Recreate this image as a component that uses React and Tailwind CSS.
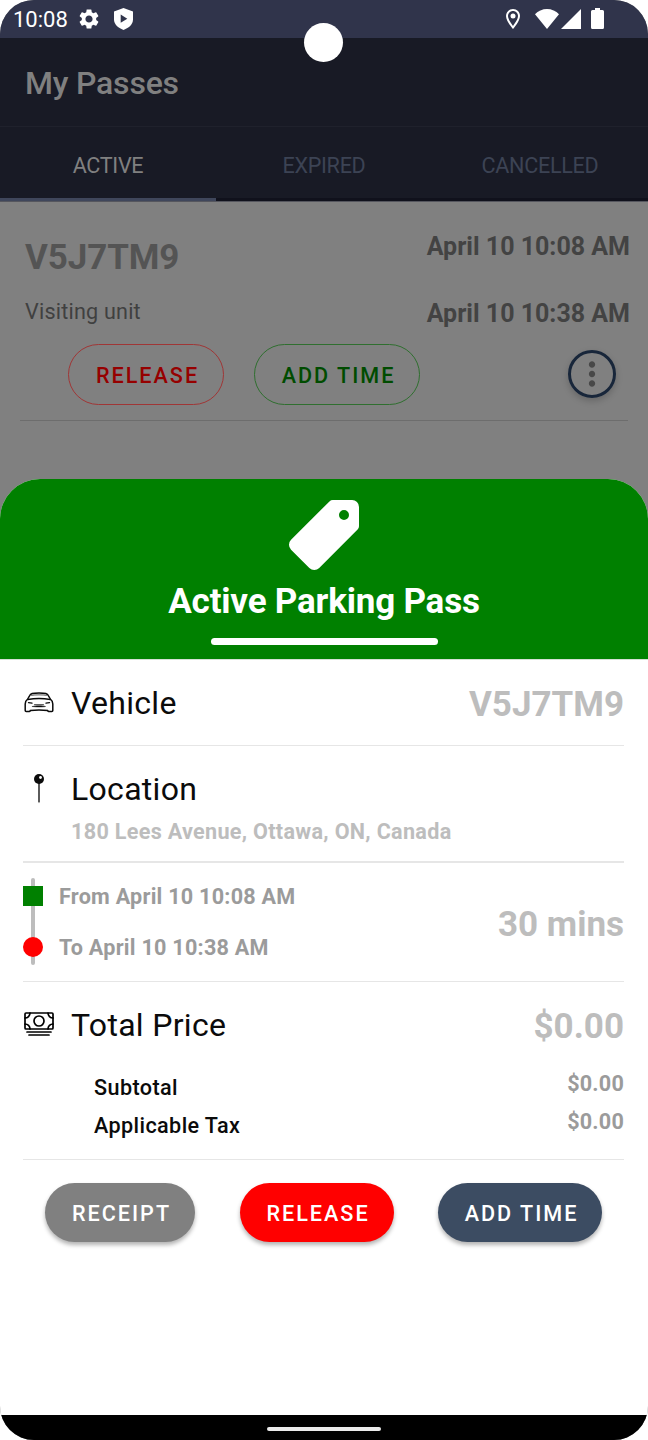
import React from 'react';
import { MdSettings, MdOutlineLocationOn, MdMoreVert } from 'react-icons/md';
import { IoCashOutline, IoPricetag } from 'react-icons/io5';

const StatusBar = () => (
  <div className="relative h-[38px] bg-[#30344b] text-white">
    <div className="flex h-full items-center justify-between pl-[13px] pr-[44px]">
      <div className="flex items-center">
        <span className="pt-[2px] text-[22px] leading-none">10:08</span>
        <MdSettings className="ml-[9px] size-[24px]" />
        <svg className="ml-[13px] h-[22px] w-[19px]" viewBox="0 0 19 22">
          <path d="M9.5 0 19 3.4v8.2c0 4.8-3.8 8.4-9.5 10.4C3.8 20 0 16.4 0 11.6V3.4z" fill="#fff" />
          <path d="M6.7 6.6v8.2l6.6-4.1z" fill="#30344b" />
        </svg>
      </div>
      <div className="flex items-center pb-[1px]">
        <MdOutlineLocationOn className="size-[24px]" />
        <svg className="ml-[10px] h-[20px] w-[24px]" viewBox="0 0 24 20">
          <path d="M12 20 0 5.2C3 2 7.4 0 12 0s9 2 12 5.2z" fill="#fff" />
        </svg>
        <svg className="ml-[2px] size-[20px]" viewBox="0 0 20 20">
          <path d="M20 0v20H0z" fill="#fff" />
        </svg>
        <svg className="ml-[10px] h-[21px] w-[13px]" viewBox="0 0 13 21">
          <path d="M4 0h5v2h2.5A1.5 1.5 0 0 1 13 3.5v16a1.5 1.5 0 0 1-1.5 1.5h-10A1.5 1.5 0 0 1 0 19.5v-16A1.5 1.5 0 0 1 1.5 2H4z" fill="#fff" />
        </svg>
      </div>
    </div>
    <div className="absolute left-[304px] top-[23px] size-[39px] rounded-full bg-white" />
  </div>
);

const CarIcon = () => (
  <svg className="size-[32px]" viewBox="0 0 32 32" fill="none" stroke="#0b0b0b" strokeWidth="1.5" strokeLinecap="round" strokeLinejoin="round">
    <path d="M2.2 23.500V17c0-2.400.9-3.800 2.500-5L6.500 8.800C7.700 6.300 9.300 5.900 16 5.900s8.300.4 9.500 2.900l1.800 3.200c1.600 1.200 2.500 2.600 2.500 5v6.500a1 1 0 0 1-1 1h-3a1 1 0 0 1-1-.9c-5-.7-12.600-.7-17.600 0a1 1 0 0 1-1 .9h-3a1 1 0 0 1-1-1z" />
    <path d="M4.700 12.400c6-.9 16.600-.9 22.600 0" />
    <path d="M8.500 8.300c4-.6 11-.6 15 0" strokeWidth="0.7" />
    <path d="M5.500 15.700l3.500.5M26.500 15.700l-3.500.5" strokeWidth="1.300" />
    <path d="M11.500 17.700h9" strokeWidth="0.8" />
    <path d="M9.500 19.500c2-.9 11-.9 13 0-2 .6-11 .6-13 0z" fill="#0b0b0b" strokeWidth="0.500" />
  </svg>
);

const PinIcon = () => (
  <svg className="size-[32px]" viewBox="0 0 32 32">
    <path d="M15.2 9h1.600v19.500l-.8 1.800-.8-1.800z" fill="#333" />
    <circle cx="16" cy="6" r="5" fill="#0b0b0b" />
    <circle cx="17.5" cy="4.5" r="1.4" fill="#fff" />
  </svg>
);

const Tab = ({ label, active }) => (
  <div
    className={`flex h-full flex-1 items-center justify-center border-b-[3px] pt-[7px] text-[21.6px] tracking-[-0.3px] ${
      active ? 'border-[#3f465b] text-[#808080]' : 'border-[#10111c] text-[#3c4354]'
    }`}
  >
    {label}
  </div>
);

const PassItem = () => (
  <div className="h-[277px] pl-[25px] pr-[18px] pt-[30px]">
    <div className="flex justify-between font-bold">
      <div>
        <p className="mt-[5px] text-[35px] leading-[42px] tracking-[-0.1px] text-[#545454]">V5J7TM9</p>
        <p className="mt-[19px] text-[21.6px] font-normal leading-[28px] tracking-[0.2px] text-[#404040]">Visiting unit</p>
      </div>
      <div className="text-right text-[25px] leading-[30px] text-[#434343]">
        <p>April 10 10:08 AM</p>
        <p className="mt-[37px]">April 10 10:38 AM</p>
      </div>
    </div>
    <div className="mt-[15px] flex items-center pl-[43px] text-[21.6px] font-medium tracking-[2px]">
      <button className="h-[61px] w-[156px] rounded-full border border-[#a03636] pl-[3px] pt-[3px] text-[#960000]">RELEASE</button>
      <button className="ml-[30px] h-[61px] w-[166px] rounded-full border border-[#2f6f2f] pl-[3px] pt-[3px] text-[#004c00]">ADD TIME</button>
      <button className="mb-[2px] ml-[148px] flex size-[48px] items-center justify-center rounded-full border-[3px] border-[#18263a] text-[#484848] shadow-[0_3px_7px_rgba(0,0,0,0.2)]">
        <MdMoreVert className="size-[38px] shrink-0" />
      </button>
    </div>
    <div className="-ml-[5px] mr-[2px] mt-[15px] h-px bg-[#6d6d6d]" />
  </div>
);

const SectionTitle = ({ icon, children }) => (
  <div className="flex items-center">
    {icon}
    <h3 className="ml-[16px] text-[32px] leading-[38px] tracking-[0.3px] text-[#0b0b0b]">{children}</h3>
  </div>
);

const PriceLine = ({ label, value }) => (
  <div className="flex h-[38px] justify-between pl-[71px] text-[21.6px] leading-[26px]">
    <span className="pt-[4px] font-medium tracking-[0.4px] text-[#0b0b0b]">{label}</span>
    <span className="font-bold tracking-[0.2px] text-[#9b9b9b]">{value}</span>
  </div>
);

const PassSheet = () => (
  <div className="flex flex-1 flex-col overflow-hidden rounded-t-[40px] bg-white">
    <div className="flex h-[181px] flex-col items-center border-b border-[#d5e0d5] bg-[#008000] pt-[16px] text-white">
      <IoPricetag className="size-[80px]" />
      <h2 className="mt-[6px] text-[35px] font-bold leading-[42px] tracking-[-0.2px]">Active Parking Pass</h2>
      <div className="mt-[15px] h-[7px] w-[227px] rounded-full bg-white" />
    </div>

    <div className="pl-[23px] pr-[24px]">
      <div className="flex h-[86px] items-center justify-between border-b border-[#e6e6e6]">
        <SectionTitle icon={<CarIcon />}>Vehicle</SectionTitle>
        <span className="pt-[5px] text-[35px] font-bold leading-[42px] text-[#bdbdbd]">V5J7TM9</span>
      </div>

      <div className="h-[117px] border-b-2 border-[#e6e6e6] pt-[24px]">
        <SectionTitle icon={<PinIcon />}>Location</SectionTitle>
        <p className="ml-[48px] mt-[11px] text-[21.6px] font-bold leading-[26px] tracking-[0.3px] text-[#bdbdbd]">
          180 Lees Avenue, Ottawa, ON, Canada
        </p>
      </div>

      <div className="flex h-[119px] items-center justify-between border-b border-[#e6e6e6] pb-[1px]">
        <div className="flex items-center">
          <div className="relative h-[87px] w-[20px]">
            <div className="mx-auto h-full w-[4px] rounded-full bg-[#bdbdbd]" />
            <div className="absolute left-0 top-[8px] size-[20px] bg-[#008000]" />
            <div className="absolute left-0 top-[59px] size-[20px] rounded-full bg-[#ff0000]" />
          </div>
          <div className="ml-[16px] pt-[2px] text-[21.6px] font-bold leading-[26px] tracking-[0.25px] text-[#9b9b9b]">
            <p>From April 10 10:08 AM</p>
            <p className="mt-[25px]">To April 10 10:38 AM</p>
          </div>
        </div>
        <span className="pt-[6px] text-[35px] font-bold leading-[42px] text-[#bdbdbd]">30 mins</span>
      </div>

      <div className="h-[178px] border-b border-[#e6e6e6] pt-[22px]">
        <div className="flex h-[42px] items-center justify-between">
          <SectionTitle icon={<IoCashOutline className="mb-[2px] size-[32px] [&_*]:[stroke-width:27px]" />}>Total Price</SectionTitle>
          <span className="pt-[3px] text-[35px] font-bold leading-[42px] text-[#bdbdbd]">$0.00</span>
        </div>
        <div className="mt-[25px]">
          <PriceLine label="Subtotal" value="$0.00" />
          <PriceLine label="Applicable Tax" value="$0.00" />
        </div>
      </div>

      <div className="flex justify-between px-[22px] pt-[23px] text-[21.6px] font-medium tracking-[2px] text-white">
        <button className="h-[59px] w-[150px] rounded-full bg-[#808080] pl-[3px] pt-[3px] shadow-[0_3px_4px_rgba(0,0,0,0.3)]">RECEIPT</button>
        <button className="h-[59px] w-[154px] rounded-full bg-[#ff0000] pl-[3px] pt-[3px] shadow-[0_3px_4px_rgba(0,0,0,0.3)]">RELEASE</button>
        <button className="h-[59px] w-[164px] rounded-full bg-[#3c4c62] pl-[3px] pt-[3px] shadow-[0_3px_4px_rgba(0,0,0,0.3)]">ADD TIME</button>
      </div>
    </div>
  </div>
);

const App = () => (
  <div className="h-[1440px] w-[648px] bg-white font-['Roboto',sans-serif]">
    <div className="flex h-full flex-col overflow-hidden rounded-[34px] bg-[#808080]">
      <StatusBar />
      <header className="flex h-[88px] items-center bg-[#181a25] pl-[25px] pt-[2px]">
        <h1 className="text-[32px] font-medium tracking-[-0.2px] text-[#808080]">My Passes</h1>
      </header>
      <nav className="flex h-[75px] items-center border-t border-[#1f212c] bg-[#181a25]">
        <Tab label="ACTIVE" active />
        <Tab label="EXPIRED" />
        <Tab label="CANCELLED" />
      </nav>
      <div className="h-px bg-[#55565e]" />
      <PassItem />
      <PassSheet />
      <div className="flex h-[25px] items-center justify-center bg-black">
        <div className="mt-[2px] h-[4px] w-[114px] rounded-full bg-[#ebebeb]" />
      </div>
    </div>
  </div>
);

export default App;
